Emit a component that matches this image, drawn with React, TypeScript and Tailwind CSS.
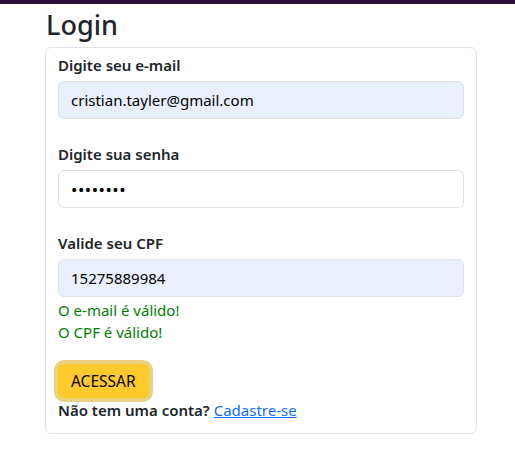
import React from "react";

export default function App() {
  const font = { fontFamily: '"Noto Sans", "Open Sans", sans-serif' };
  return (
    <div className="min-h-[466px] bg-white text-[#212529]" style={font}>
      <div className="h-1 bg-[#2b0e3c]" />
      <div className="pl-[45px] w-[477px]">
        <h2 className="text-[27px] leading-[1.2] font-medium pl-px pt-[5px] mb-[6px]">Login</h2>
        <div className="border border-[#dee2e6] rounded-[6px] px-3 pt-[5px] pb-[11px]">
          <label className="block font-semibold text-[15px] leading-6 mb-1">Digite seu e-mail</label>
          <div className="h-[38px] rounded-[6px] border border-[#dee2e6] bg-[#e8f0fe] px-3 flex items-center text-[15px] text-black">
            cristian.tayler@gmail.com
          </div>
          <label className="block font-semibold text-[15px] leading-6 mt-[23px] mb-1">Digite sua senha</label>
          <div className="h-[38px] rounded-[6px] border border-[#dee2e6] bg-white px-3 flex items-center text-[17px] text-black tracking-[0.5px]">
            ••••••••
          </div>
          <label className="block font-semibold text-[15px] leading-6 mt-[23px] mb-1">Valide seu CPF</label>
          <div className="h-[38px] rounded-[6px] border border-[#dee2e6] bg-[#e8f0fe] px-3 flex items-center text-[15px] text-black">
            15275889984
          </div>
          <p className="text-[15px] leading-[22px] text-[#008000] mt-[2px]">O e-mail é válido!</p>
          <p className="text-[15px] leading-[22px] text-[#008000]">O CPF é válido!</p>
          <button className="mt-[21px] h-[34px] px-3 rounded-[6px] bg-[#ffca2c] border border-[#ffc720] text-[15.5px] text-black shadow-[0_0_0_4px_rgba(217,164,6,0.5)]">
            ACESSAR
          </button>
          <p className="text-[15px] leading-6 font-semibold">
            Não tem uma conta?{" "}
            <a href="#" className="text-[#0d6efd] underline font-normal">Cadastre-se</a>
          </p>
        </div>
      </div>
    </div>
  );
}
